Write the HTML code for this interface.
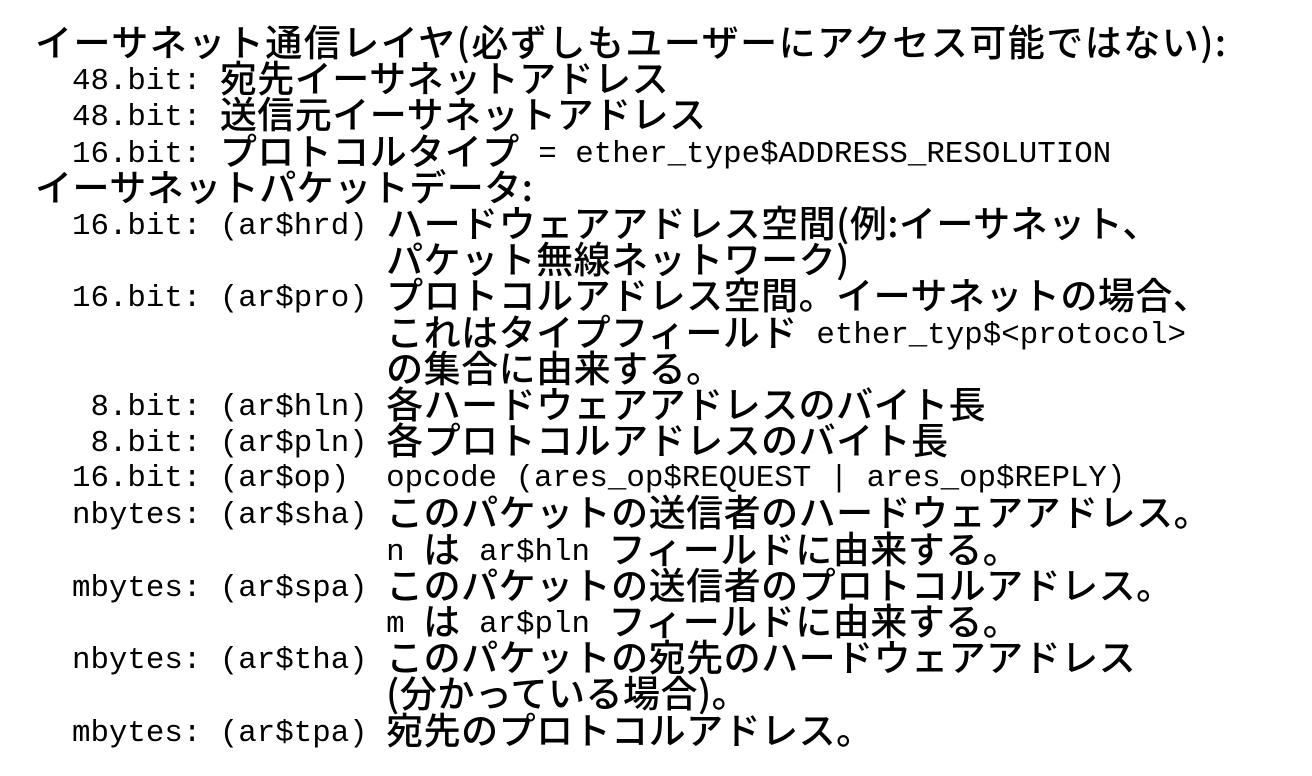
<!DOCTYPE html>
<html><head><meta charset="utf-8"><style>
html,body{margin:0;padding:0;background:#fff;width:1312px;height:776px;overflow:hidden}
.w{padding:27px 0 0 35px;font-family:"Liberation Mono","Noto Sans CJK JP",monospace;font-size:30.8px;color:#000}
.w div{height:36.2px;line-height:36.2px;white-space:pre;overflow:visible}
.j{font-family:"Noto Sans CJK JP","Liberation Sans",sans-serif;font-size:37px;line-height:20px;font-weight:500;position:relative;top:3px;letter-spacing:0.5px}
</style></head><body><div class="w">
<div><span class="j" style="letter-spacing:1.5px">イーサネット通信レイヤ(必ずしもユーザーにアクセス可能ではない):</span></div>
<div>  48.bit: <span class="j">宛先イーサネットアドレス</span></div>
<div>  48.bit: <span class="j">送信元イーサネットアドレス</span></div>
<div>  16.bit: <span class="j">プロトコルタイプ</span> = ether_type$ADDRESS_RESOLUTION</div>
<div><span class="j">イーサネットパケットデータ:</span></div>
<div>  16.bit: (ar$hrd) <span class="j">ハードウェアアドレス空間(例:イーサネット、</span></div>
<div>                   <span class="j">パケット無線ネットワーク)</span></div>
<div>  16.bit: (ar$pro) <span class="j">プロトコルアドレス空間。イーサネットの場合、</span></div>
<div>                   <span class="j">これはタイプフィールド</span> ether_typ$&lt;protocol&gt;</div>
<div>                   <span class="j">の集合に由来する。</span></div>
<div>   8.bit: (ar$hln) <span class="j">各ハードウェアアドレスのバイト長</span></div>
<div>   8.bit: (ar$pln) <span class="j">各プロトコルアドレスのバイト長</span></div>
<div>  16.bit: (ar$op)  opcode (ares_op$REQUEST | ares_op$REPLY)</div>
<div>  nbytes: (ar$sha) <span class="j">このパケットの送信者のハードウェアアドレス。</span></div>
<div>                   n <span class="j">は</span> ar$hln <span class="j">フィールドに由来する。</span></div>
<div>  mbytes: (ar$spa) <span class="j">このパケットの送信者のプロトコルアドレス。</span></div>
<div>                   m <span class="j">は</span> ar$pln <span class="j">フィールドに由来する。</span></div>
<div>  nbytes: (ar$tha) <span class="j">このパケットの宛先のハードウェアアドレス</span></div>
<div>                   <span class="j">(分かっている場合)。</span></div>
<div>  mbytes: (ar$tpa) <span class="j">宛先のプロトコルアドレス。</span></div>
</div></body></html>
